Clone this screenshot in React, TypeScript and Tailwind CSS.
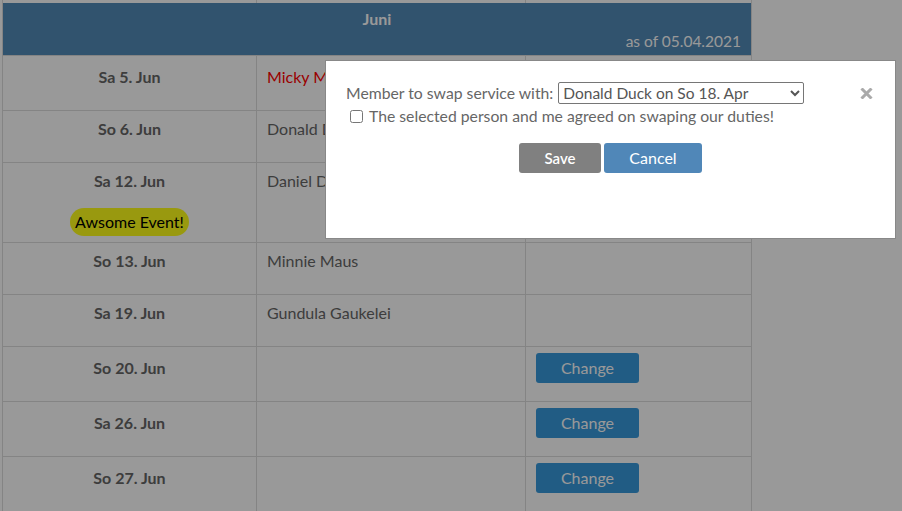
import { useState } from "react";

type Row = {
  date: string;
  name?: string;
  nameRed?: boolean;
  event?: string;
  button?: boolean;
};

const rows: Row[] = [
  { date: "Sa 5. Jun", name: "Micky Maus", nameRed: true, button: true },
  { date: "So 6. Jun", name: "Donald Duck" },
  { date: "Sa 12. Jun", name: "Daniel Düsentrieb", event: "Awsome Event!" },
  { date: "So 13. Jun", name: "Minnie Maus" },
  { date: "Sa 19. Jun", name: "Gundula Gaukelei" },
  { date: "So 20. Jun", button: true },
  { date: "Sa 26. Jun", button: true },
  { date: "So 27. Jun", button: true },
];

export default function App() {
  const [member, setMember] = useState("donald");
  const [agreed, setAgreed] = useState(false);

  return (
    <div className="relative h-[511px] overflow-hidden bg-white font-['Lato',sans-serif] text-[#666]">
      <div className="ml-[2px] w-[750px]">
        {/* end of the previous row, cut off by the scroll */}
        <div className="grid h-[3px] grid-cols-[254px_269px_227px]">
          <div className="border-l border-[#ddd]" />
          <div className="border-l border-[#ddd]" />
          <div className="border-x border-[#ddd]" />
        </div>

        <div className="h-[53px] border-x border-b border-[#ddd] bg-[#538ab7] px-[10px] pt-1 text-white">
          <div className="text-center text-base leading-6 font-bold">Juni</div>
          <div className="text-right text-[15.5px] leading-5">as of 05.04.2021</div>
        </div>

        {rows.map((r) => (
          <div
            key={r.date}
            className={
              "grid grid-cols-[254px_269px_227px] border-b border-[#ddd] " +
              (r.event ? "h-[80px]" : r.button ? "h-[55px]" : "h-[52px]")
            }
          >
            <div
              className={
                "flex flex-col items-center border-l border-[#ddd] px-[10px] " +
                (r.button ? "pt-[9px]" : "pt-[6px]")
              }
            >
              <span className="text-base leading-6 font-bold">{r.date}</span>
              {r.event && (
                <span className="mt-[15px] rounded-full bg-[#ffff1a] px-[5px] text-base leading-7 text-black">
                  {r.event}
                </span>
              )}
            </div>
            <div
              className={
                "border-l border-[#ddd] px-[10px] text-base leading-6 " +
                (r.button ? "pt-[9px]" : "pt-[6px]") +
                (r.nameRed ? " text-[#ff0000]" : "")
              }
            >
              {r.name}
            </div>
            <div className="border-x border-[#ddd] px-[10px] pt-[6px]">
              {r.button && (
                <button className="h-[30px] w-[103px] rounded-[3px] bg-[#3799dc] text-base text-white">
                  Change
                </button>
              )}
            </div>
          </div>
        ))}
      </div>

      {/* modal backdrop */}
      <div className="absolute inset-0 bg-black/40" />

      <div className="absolute top-[60px] left-[325px] h-[179px] w-[571px] border border-[#888] bg-white px-5 pt-5 text-[15.75px] text-[#666]">
        <button className="absolute top-[27px] right-[22px] text-[#aaa]" aria-label="close">
          <svg width="13" height="11" viewBox="0 0 13 11">
            <path d="M1.5 0.5 L11.5 10.5 M11.5 0.5 L1.5 10.5" stroke="currentColor" strokeWidth="3" />
          </svg>
        </button>

        <div className="flex h-[23px] items-center">
          <label htmlFor="member" className="leading-6">
            Member to swap service with:
          </label>
          <select
            id="member"
            value={member}
            onChange={(e) => setMember(e.target.value)}
            className="ml-[5px] h-[22px] w-[246px] rounded-[2px] border border-[#767676] bg-white pl-0 text-[15.5px] leading-5 text-[#555]"
          >
            <option value="donald">Donald Duck on So 18. Apr</option>
            <option value="minnie">Minnie Maus on Sa 24. Apr</option>
          </select>
        </div>

        <label className="flex h-6 items-center">
          <input
            type="checkbox"
            checked={agreed}
            onChange={(e) => setAgreed(e.target.checked)}
            className="ml-[4px] h-[13px] w-[13px]"
          />
          <span className="ml-[6px] leading-6">
            The selected person and me agreed on swaping our duties!
          </span>
        </label>

        <div className="mt-[15px] flex justify-center gap-[3px]">
          <button className="h-[30px] w-[82px] rounded-[3px] bg-[#808080] text-[15px] font-semibold text-white">
            Save
          </button>
          <button className="h-[30px] w-[98px] rounded-[3px] bg-[#5087b8] text-base text-white">
            Cancel
          </button>
        </div>
      </div>
    </div>
  );
}
